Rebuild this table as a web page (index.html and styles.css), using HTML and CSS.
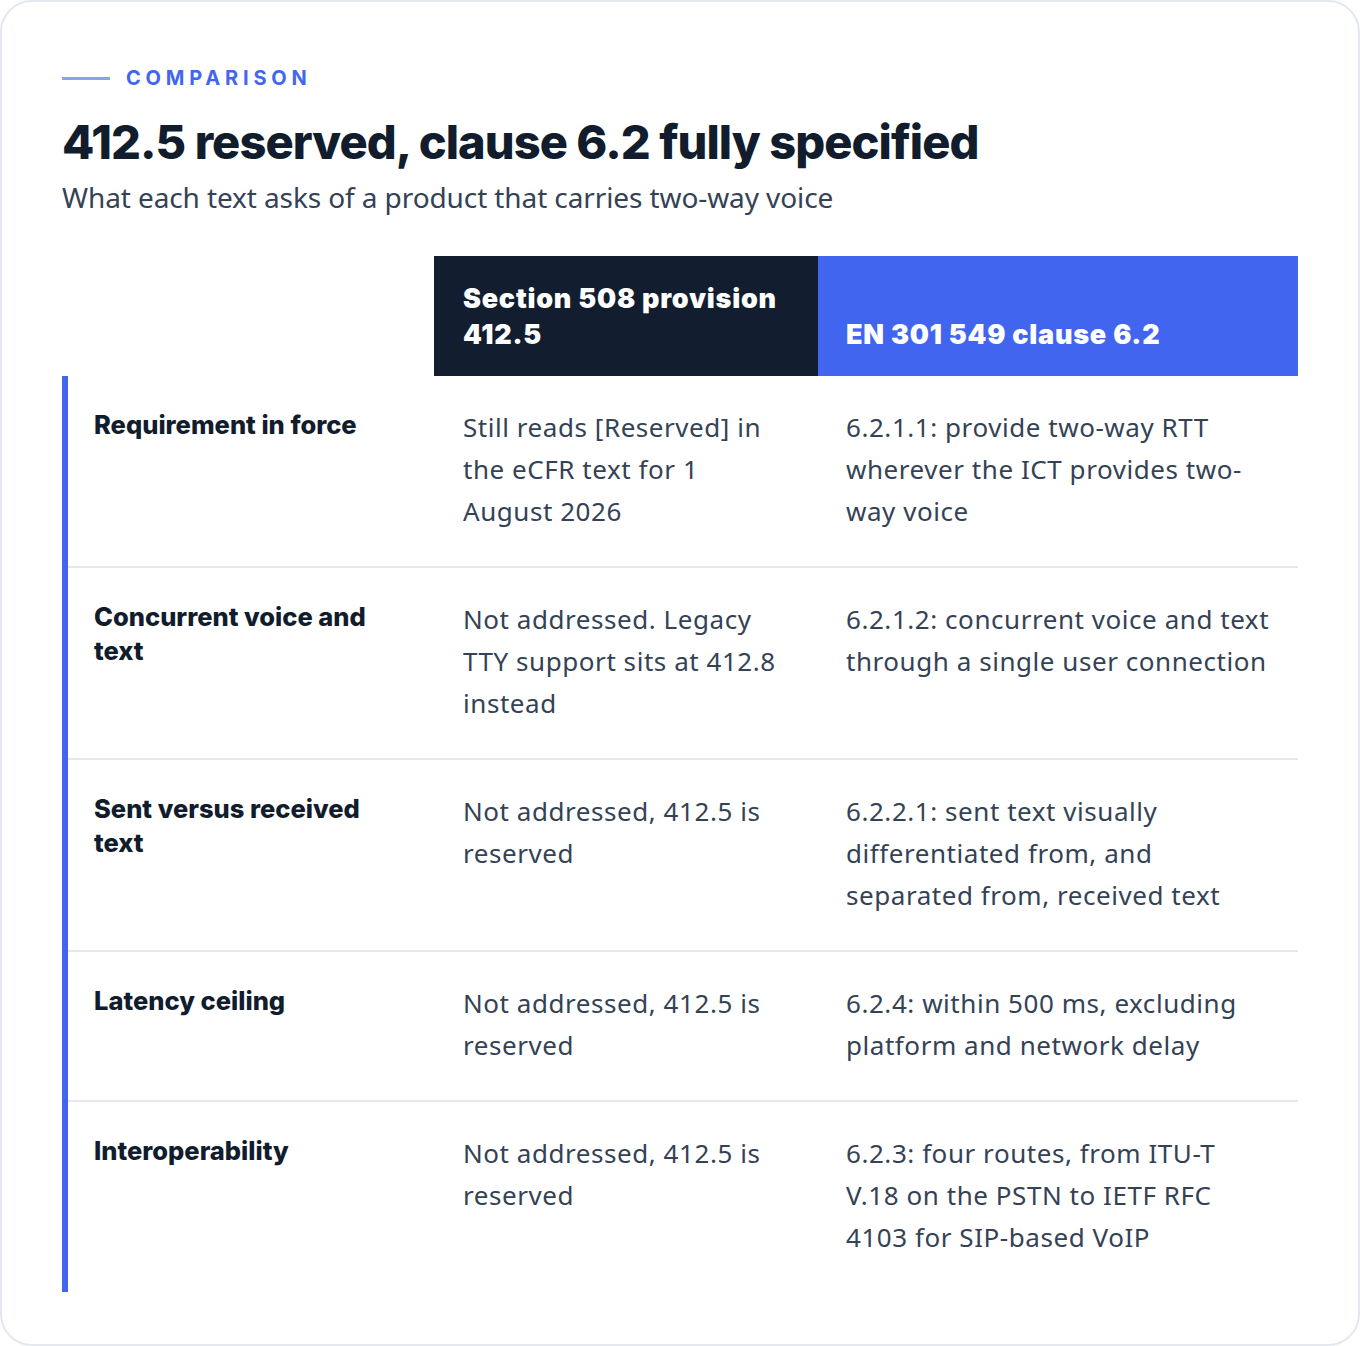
FILE: index.html
```html
<!DOCTYPE html>
<html lang="en">
<head>
<meta charset="utf-8">
<title>Comparison</title>
<link rel="stylesheet" href="styles.css">
</head>
<body>
<main class="card">
  <div class="eyebrow"><span class="eyebrow-line"></span><span class="eyebrow-text">COMPARISON</span></div>
  <h1 class="title">412.5 reserved, clause 6.2 fully specified</h1>
  <p class="subtitle">What each text asks of a product that carries two-way voice</p>

  <div class="table">
    <div class="head">
      <div class="head-empty"></div>
      <div class="head-cell head-dark">Section 508 provision 412.5</div>
      <div class="head-cell head-blue">EN 301 549 clause 6.2</div>
    </div>
    <div class="body">
      <div class="row">
        <div class="label">Requirement in force</div>
        <div class="cell">Still reads [Reserved] in the eCFR text for 1 August 2026</div>
        <div class="cell">6.2.1.1: provide two-way RTT wherever the ICT provides two-way voice</div>
      </div>
      <div class="row">
        <div class="label">Concurrent voice and text</div>
        <div class="cell">Not addressed. Legacy TTY support sits at 412.8 instead</div>
        <div class="cell">6.2.1.2: concurrent voice and text through a single user connection</div>
      </div>
      <div class="row">
        <div class="label">Sent versus received text</div>
        <div class="cell">Not addressed, 412.5 is reserved</div>
        <div class="cell">6.2.2.1: sent text visually differentiated from, and separated from, received text</div>
      </div>
      <div class="row">
        <div class="label">Latency ceiling</div>
        <div class="cell">Not addressed, 412.5 is reserved</div>
        <div class="cell">6.2.4: within 500 ms, excluding platform and network delay</div>
      </div>
      <div class="row">
        <div class="label">Interoperability</div>
        <div class="cell">Not addressed, 412.5 is reserved</div>
        <div class="cell">6.2.3: four routes, from ITU-T V.18 on the PSTN to IETF RFC 4103 for SIP-based VoIP</div>
      </div>
    </div>
  </div>
</main>
</body>
</html>
```

FILE: styles.css
```css
* { box-sizing: border-box; }
html, body { margin: 0; padding: 0; background: #ffffff; }
body { width: 1360px; height: 1346px; }

.card {
  width: 1360px;
  height: 1346px;
  border: 2px solid #e3e8ef;
  border-radius: 32px;
  background: #ffffff;
  padding: 65px 60px 0 60px;
  font-family: "Noto Sans", "Open Sans", sans-serif;
}

.eyebrow {
  display: flex;
  align-items: center;
  gap: 16px;
  height: 22px;
}
.eyebrow-line {
  width: 48px;
  height: 3px;
  background: #8aa0f5;
}
.eyebrow-text {
  font-family: "Inter", sans-serif;
  font-weight: 700;
  font-size: 20px;
  letter-spacing: 0.24em;
  color: #4366f0;
}

.title {
  margin: 25px 0 0 0;
  font-family: "Inter", sans-serif;
  font-weight: 800;
  font-size: 47px;
  line-height: 56px;
  letter-spacing: -0.02em;
  color: #111c2d;
}

.subtitle {
  margin: 8px 0 0 0;
  font-size: 28px;
  line-height: 38px;
  letter-spacing: -0.1px;
  color: #344256;
}

.table {
  margin-top: 40px;
  width: 1236px;
}
.head {
  display: grid;
  grid-template-columns: 372px 384px 480px;
}
.head-cell {
  display: flex;
  align-items: flex-end;
  height: 120px;
  padding: 22px 29px 23px 29px;
  font-family: "Inter", sans-serif;
  font-weight: 900;
  font-size: 27px;
  line-height: 36px;
  letter-spacing: 0.75px;
  color: #ffffff;
}
.head-dark { background: #121e2f; }
.head-blue { background: #4265f0; padding-left: 28px; }

.body {
  border-left: 6px solid #4265f0;
}
.row {
  display: grid;
  grid-template-columns: 366px 384px 480px;
  border-bottom: 2px solid #e3e8ef;
}
.row:last-child { border-bottom: none; }

.label {
  padding: 32px 40px 32px 26px;
  font-family: "Inter", sans-serif;
  font-weight: 800;
  font-size: 25.5px;
  line-height: 34px;
  color: #111c2d;
}
.cell {
  padding: 30px 28px 34px 29px;
  font-size: 26px;
  line-height: 42px;
  letter-spacing: 0.55px;
  color: #344256;
}
.cell + .cell { padding-left: 28px; }
```
